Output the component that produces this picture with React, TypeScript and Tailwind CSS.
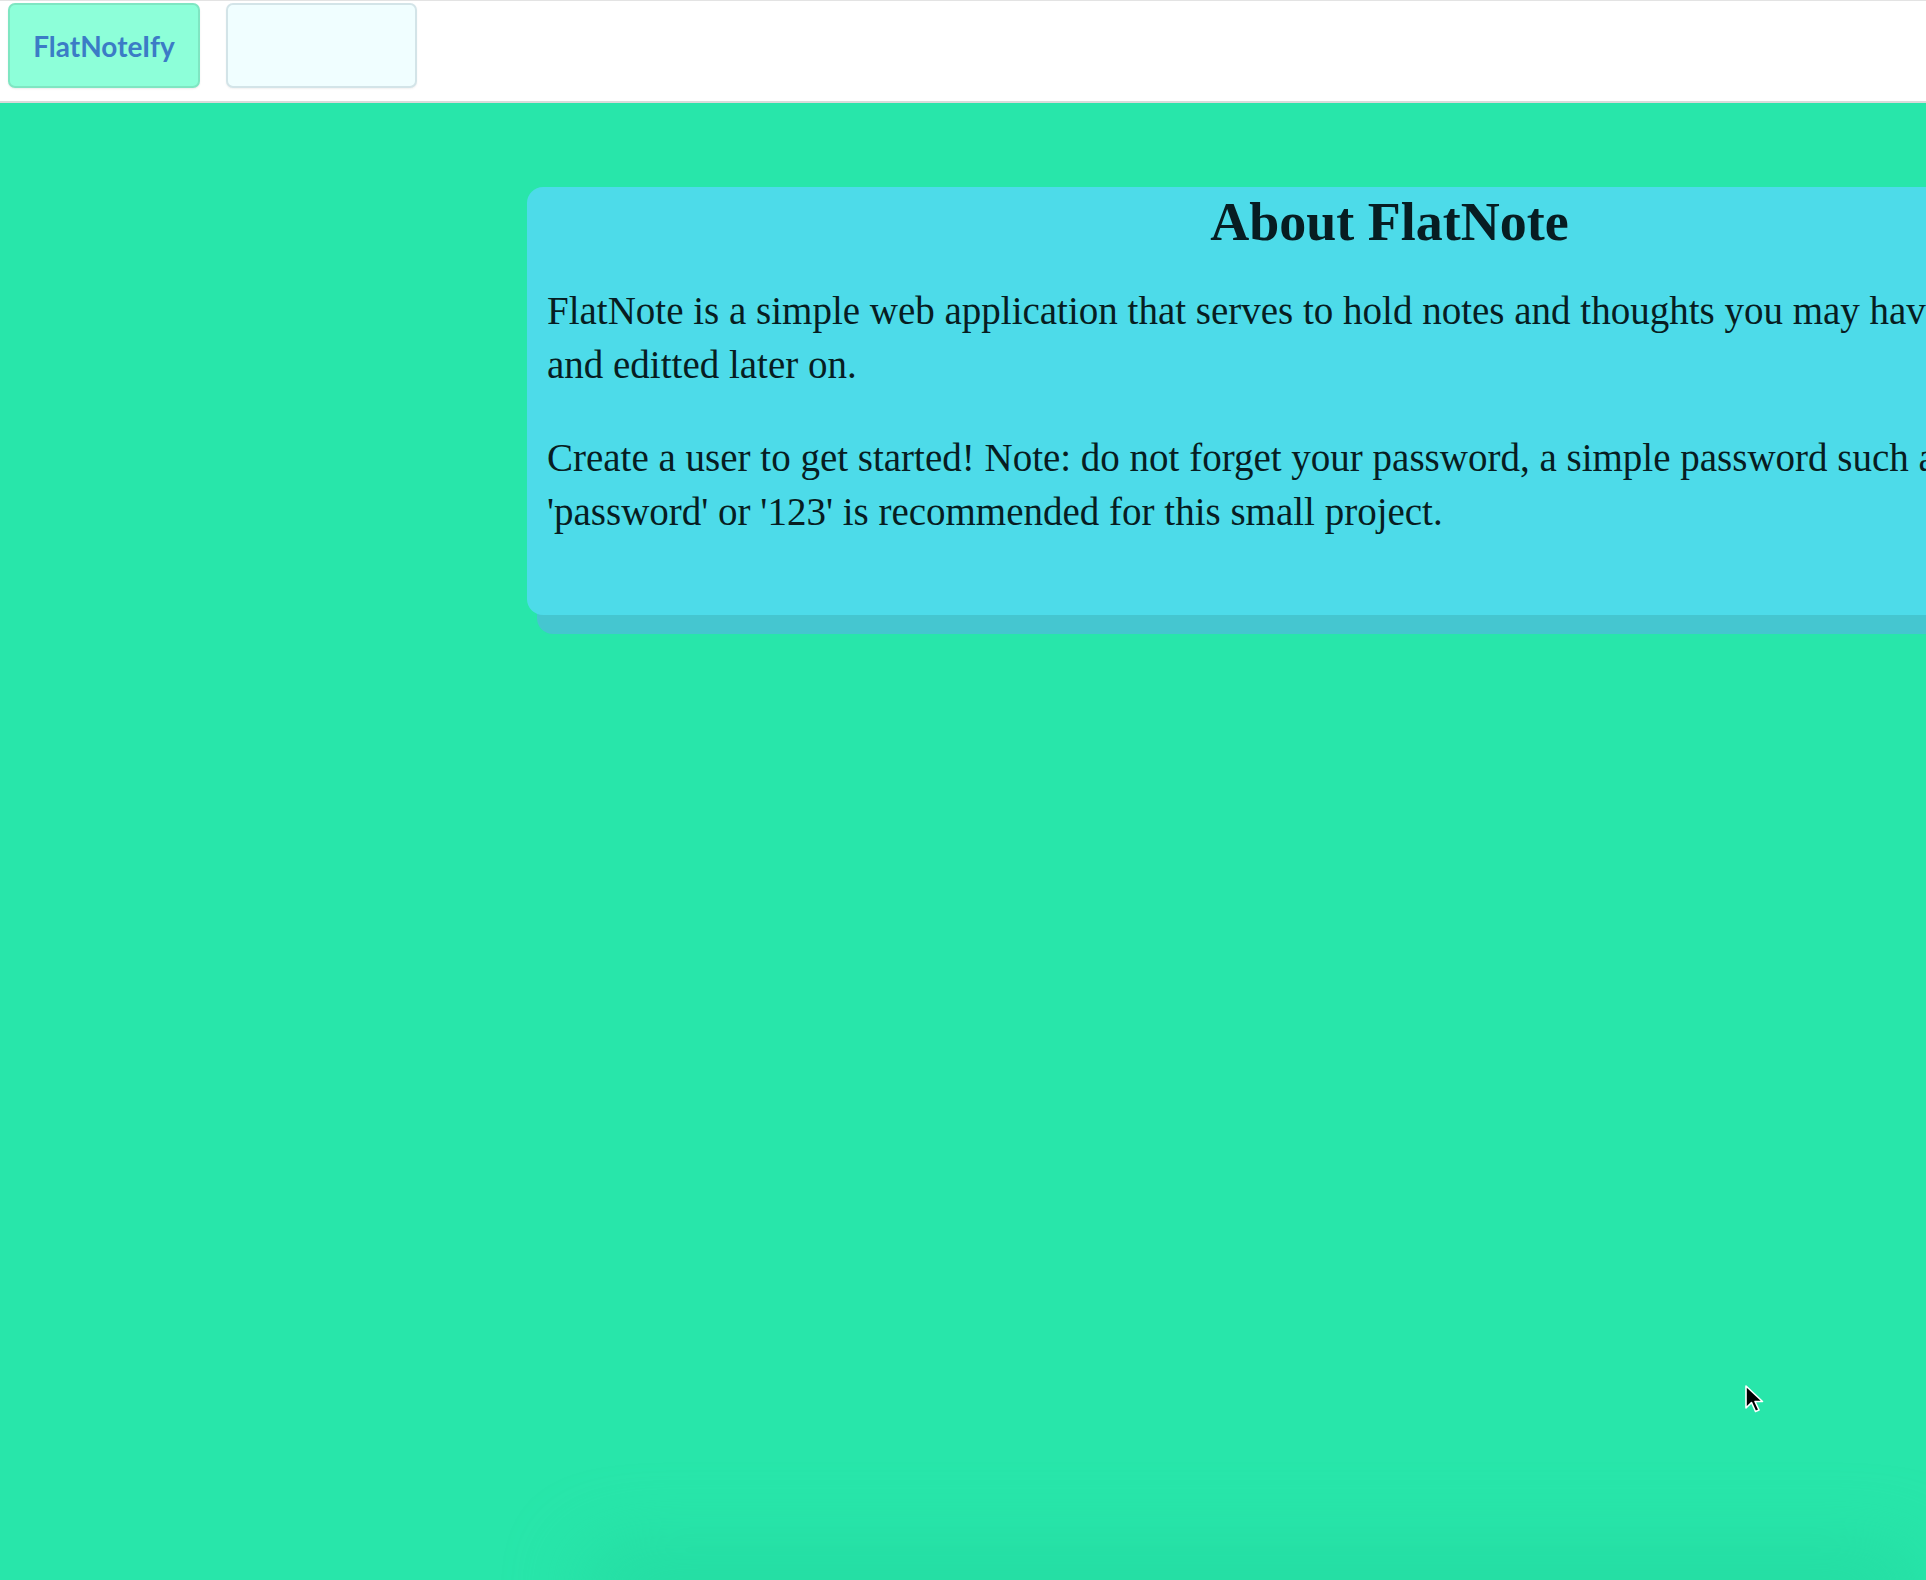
import React from "react";

function Cursor() {
  return (
    <svg
      className="absolute left-[1744px] top-[1384px] h-[30px] w-[22px]"
      viewBox="0 0 22 30"
      fill="none"
    >
      <path
        d="M2 2 L2 24 L7.5 18.5 L11.5 27.5 L15 26 L11 17.5 L18.5 17.5 Z"
        fill="#000"
        stroke="#fff"
        strokeWidth={1.6}
        strokeLinejoin="round"
      />
    </svg>
  );
}

export default function App() {
  return (
    <div className="relative flex min-h-[1580px] w-full flex-col overflow-hidden bg-[#28e6aa]">
      {/* top bar */}
      <nav className="flex h-[103px] shrink-0 items-start gap-[26px] border-t border-b-2 border-t-[#e3e3e3] border-b-[#dadada] bg-white pl-2 pt-[2px]">
        <button className="flex h-[85px] w-[192px] items-center justify-center rounded-[7px] border-2 border-[#7fe6c2] bg-[#8dffd9] font-['Lato',sans-serif] text-[28px] font-bold text-[#3b7cc6] shadow-[0_1px_2px_rgba(0,0,0,0.08)]">
          FlatNoteIfy
        </button>
        <button className="h-[85px] w-[191px] rounded-[7px] border-2 border-[#d3e4e8] bg-[#f0feff] shadow-[0_1px_2px_rgba(0,0,0,0.06)]" />
      </nav>

      <main className="flex flex-1 flex-col">
        <section className="ml-[527px] mt-[84px] w-[1725px] shrink-0 rounded-[16px] bg-[#4ddbe9] px-5 pb-[40px] pt-[5px] font-['Liberation_Serif',serif] text-[#071d22] shadow-[10px_19px_0_#45c6d0]">
          <h1 className="text-center text-[54px] font-bold leading-[60px]">About FlatNote</h1>
          <p className="mt-[32px] whitespace-nowrap text-[39px] leading-[54px]">
            FlatNote is a simple web application that serves to hold notes and thoughts you may have
            <br />
            and editted later on.
          </p>
          <p className="mt-[39px] mb-[36px] whitespace-nowrap text-[39px] leading-[54px]">
            Create a user to get started! Note: do not forget your password, a simple password such as
            <br />
            'password' or '123' is recommended for this small project.
          </p>
        </section>

        <div className="mt-auto ml-[580px] h-[70px] translate-y-[40px] rounded-[40px] bg-[#1fcf98] opacity-50 blur-2xl" />
      </main>

      <Cursor />
    </div>
  );
}
